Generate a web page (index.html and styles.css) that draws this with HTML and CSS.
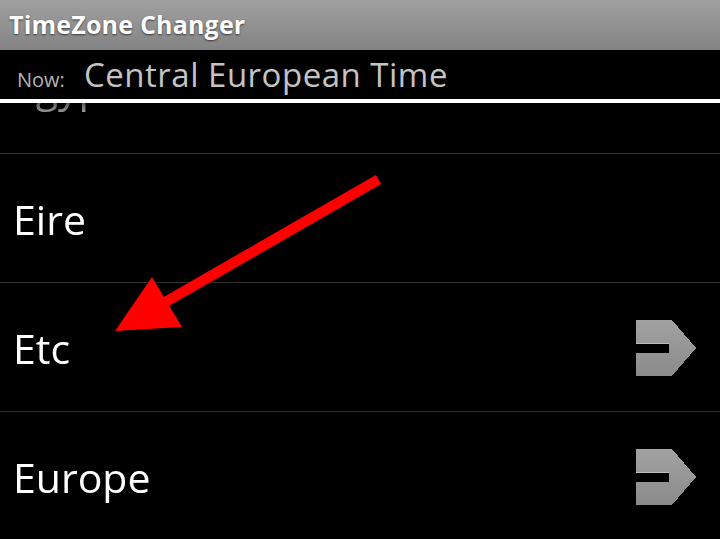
FILE: index.html
```html
<!DOCTYPE html>
<html lang="en">
<head>
    <meta charset="UTF-8">
    <meta name="viewport" content="width=device-width, initial-scale=1.0">
    <title>TimeZone Changer</title>
    <link rel="stylesheet" href="styles.css">
</head>
<body>
    <div class="screen">
        <div class="titlebar">TimeZone Changer</div>
        <div class="now">
            <span class="now-label">Now:</span>
            <span class="now-zone">Central European Time</span>
        </div>
        <div class="list">
            <div class="row row-first"><span class="name">Egypt</span></div>
            <div class="row"><span class="name">Eire</span></div>
            <div class="row">
                <span class="name">Etc</span>
                <svg class="more" width="60" height="56" viewBox="0 0 60 56" shape-rendering="crispEdges">
                    <defs>
                        <linearGradient id="g1" x1="0" y1="0" x2="0" y2="1">
                            <stop offset="0" stop-color="#a2a2a2"/>
                            <stop offset="1" stop-color="#8a8a8a"/>
                        </linearGradient>
                    </defs>
                    <path d="M0 0 H36 L60 28 L36 56 H0 V33 H33 V23 H0 Z" fill="url(#g1)"/>
                    <path d="M0 23 H33" stroke="#bdbdbd" stroke-width="1"/>
                </svg>
            </div>
            <div class="row">
                <span class="name">Europe</span>
                <svg class="more" width="60" height="56" viewBox="0 0 60 56" shape-rendering="crispEdges">
                    <path d="M0 0 H36 L60 28 L36 56 H0 V33 H33 V23 H0 Z" fill="url(#g1)"/>
                    <path d="M0 23 H33" stroke="#bdbdbd" stroke-width="1"/>
                </svg>
            </div>
        </div>

        <!-- annotation drawn over the screenshot -->
        <svg class="pointer" width="720" height="539" viewBox="0 0 720 539">
            <line x1="378.5" y1="179.5" x2="162" y2="304" stroke="#ff0000" stroke-width="10.5"/>
            <polygon points="115,331 152,277 182,327" fill="#ff0000"/>
        </svg>
    </div>
</body>
</html>
```

FILE: styles.css
```css
html, body {
    margin: 0;
    padding: 0;
    background: #000;
}
.screen {
    position: relative;
    width: 720px;
    height: 539px;
    overflow: hidden;
    font-family: "Open Sans", Roboto, sans-serif;
    background: #000;
}
.titlebar {
    height: 50px;
    box-sizing: border-box;
    padding: 7px 0 0 9px;
    background: linear-gradient(#a0a0a0, #838383);
    color: #fff;
    font-size: 25px;
    font-weight: bold;
    line-height: 34px;
    letter-spacing: 0.2px;
    text-shadow: 0 1px 2px rgba(0, 0, 0, 0.6);
}
.now {
    height: 53px;
    box-sizing: border-box;
    border-bottom: 4px solid #fff;
    display: flex;
    align-items: baseline;
    padding: 6px 0 0 17px;
}
.now-label {
    color: #b4b4b4;
    font-size: 20px;
    width: 67px;
    line-height: 24px;
}
.now-zone {
    color: #c4c4c4;
    font-size: 33px;
    line-height: 38px;
    letter-spacing: 0.5px;
}
.list {
    height: 436px;
    overflow: hidden;
    -webkit-mask-image: linear-gradient(rgba(0, 0, 0, 0.35), #000 24px);
    mask-image: linear-gradient(rgba(0, 0, 0, 0.35), #000 24px);
}
.row {
    height: 126px;
    border-bottom: 1px solid #2f2f2f;
    display: flex;
    align-items: center;
    justify-content: space-between;
    padding: 2px 24px 0 13px;
}
.row-first {
    margin-top: -78px;
}
.row-first .name {
    margin-top: -8px;
}
.name {
    color: #fff;
    font-size: 41px;
    line-height: 1;
}
.more {
    display: block;
}
.pointer {
    position: absolute;
    left: 0;
    top: 0;
}
```
